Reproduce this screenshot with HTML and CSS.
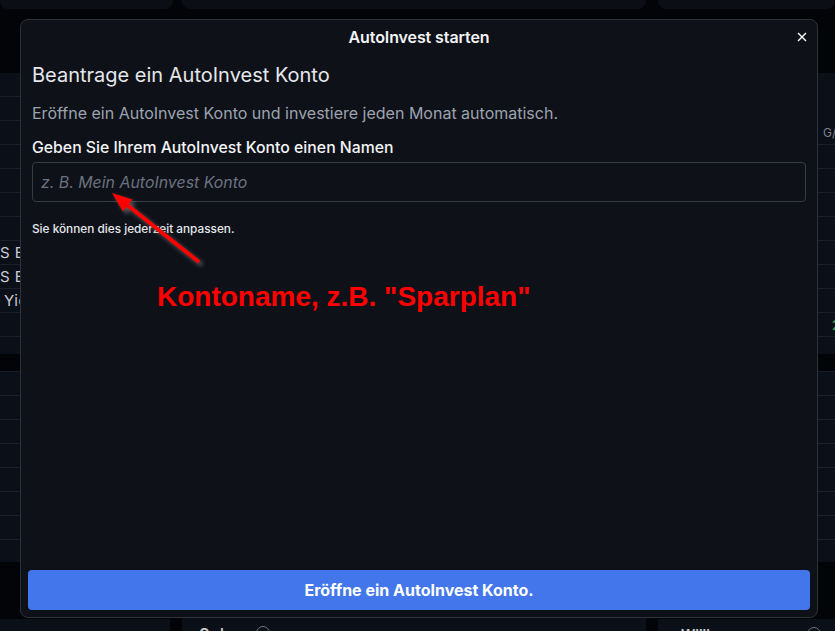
FILE: index.html
```html
<!DOCTYPE html>
<html lang="de">
<head>
<meta charset="utf-8">
<title>AutoInvest starten</title>
<link rel="stylesheet" href="styles.css">
</head>
<body>
<div class="page">
  <div class="col col-left">
    <div class="topcard"></div>
    <div class="panel panel-a">
      <div class="phead"></div>
      <div class="row"></div>
      <div class="row"></div>
      <div class="row"></div>
      <div class="row"></div>
      <div class="row"></div>
      <div class="row"></div>
      <div class="row"><span class="rtext">S ETF</span></div>
      <div class="row"><span class="rtext">S ETF</span></div>
      <div class="row"><span class="rtext pad">Yield</span></div>
      <div class="row"></div>
    </div>
    <div class="panel panel-b">
      <div class="row"></div>
      <div class="row"></div>
      <div class="row"></div>
      <div class="row"></div>
      <div class="row"></div>
      <div class="row"></div>
      <div class="row"></div>
    </div>
    <div class="panel panel-c"></div>
  </div>
  <div class="col col-mid">
    <div class="topcard"></div>
    <div class="mid-fill"></div>
    <div class="panel panel-c"><span class="ptitle">Orders</span><span class="info"></span></div>
  </div>
  <div class="col col-right">
    <div class="topcard"></div>
    <div class="panel panel-a">
      <div class="phead tall"></div>
      <div class="row thead"><span class="htext">G/V</span></div>
      <div class="row"></div>
      <div class="row"></div>
      <div class="row"></div>
      <div class="row"></div>
      <div class="row"></div>
      <div class="row"></div>
      <div class="row"></div>
      <div class="row"><span class="gtext">2,45</span></div>
      <div class="row"></div>
    </div>
    <div class="panel panel-b">
      <div class="row"></div>
      <div class="row"></div>
      <div class="row"></div>
      <div class="row"></div>
      <div class="row"></div>
      <div class="row"></div>
      <div class="row"></div>
    </div>
    <div class="panel panel-c"><span class="ptitle w">Willkommen</span><span class="info r"></span></div>
  </div>
</div>

<div class="modal">
  <div class="modal-header">
    <span class="modal-title">AutoInvest starten</span>
    <button class="close" aria-label="Schließen">
      <svg width="10" height="10" viewBox="0 0 10 10"><path d="M1 1 L9 9 M9 1 L1 9" stroke="#ffffff" stroke-width="1.4" fill="none"/></svg>
    </button>
  </div>
  <div class="modal-body">
    <h2 class="heading">Beantrage ein AutoInvest Konto</h2>
    <p class="sub">Eröffne ein AutoInvest Konto und investiere jeden Monat automatisch.</p>
    <label class="label" for="kname">Geben Sie Ihrem AutoInvest Konto einen Namen</label>
    <input id="kname" class="field" type="text" placeholder="z. B. Mein AutoInvest Konto">
    <p class="hint">Sie können dies jederzeit anpassen.</p>
  </div>
  <button class="primary">Eröffne ein AutoInvest Konto.</button>

  <svg class="arrow" width="300" height="300" viewBox="0 0 300 300">
    <line x1="178" y1="242" x2="105" y2="184" stroke="#ff0000" stroke-width="4"/>
    <polygon points="91,173 111.5,179.5 102,191.5" fill="#ff0000"/>
  </svg>
  <div class="note">Kontoname, z.B. "Sparplan"</div>
</div>
</body>
</html>
```
FILE: styles.css
```css
html, body {
  margin: 0;
  padding: 0;
}
body {
  width: 835px;
  height: 631px;
  overflow: hidden;
  background: #030407;
  font-family: Inter, "Noto Sans", sans-serif;
  position: relative;
}

/* background dashboard */
.page {
  display: grid;
  grid-template-columns: 170px 464px 1fr;
  column-gap: 12px;
  height: 631px;
}
.col {
  display: flex;
  flex-direction: column;
  min-width: 0;
}
.col-left .topcard { margin-right: -3px; }
.topcard {
  height: 9px;
  background: #0b0e15;
  border-radius: 0 0 8px 8px;
}
.panel {
  background: #0b0f17;
  overflow: hidden;
}
.panel-a {
  margin-top: 64px;
  height: 281px;
}
.panel-b {
  margin-top: 17px;
  height: 190px;
  border-top: 1px solid #161b25;
}
.panel-c {
  margin-top: 57px;
  flex: 1;
  position: relative;
}
.mid-fill { flex: 1; }
.col-mid .panel-c { margin-top: 0; height: 13px; flex: none; }
.phead { height: 23px; border-bottom: 1px solid #1a1f29; }
.phead.tall { height: 48px; border-bottom: none; }
.row {
  height: 23px;
  border-bottom: 1px solid #1a1f29;
  display: flex;
  align-items: center;
  white-space: nowrap;
}
.rtext {
  font-size: 15px;
  color: #c9ccd3;
  letter-spacing: 0.5px;
}
.rtext.pad { padding-left: 4px; }
.htext {
  padding-left: 165px;
  font-size: 12px;
  color: #7c8391;
}
.gtext {
  padding-left: 174px;
  font-size: 13px;
  font-weight: 600;
  color: #16a34a;
}
.ptitle {
  position: absolute;
  left: 17px;
  top: 7px;
  font-size: 14px;
  font-weight: 600;
  color: #c9ccd3;
}
.ptitle.w { left: 23px; }
.info {
  position: absolute;
  left: 74px;
  top: 8px;
  width: 12px;
  height: 12px;
  border: 1.5px solid #6b7280;
  border-radius: 50%;
}
.info.r { left: 149px; }

/* modal */
.modal {
  position: absolute;
  left: 20px;
  top: 19px;
  width: 798px;
  height: 599px;
  box-sizing: border-box;
  background: #0e1118;
  border: 1px solid #2c313c;
  border-radius: 8px;
  display: flex;
  flex-direction: column;
}
.modal-header {
  height: 34px;
  display: flex;
  align-items: center;
  justify-content: center;
  position: relative;
  flex: none;
}
.modal-title {
  font-size: 16px;
  font-weight: 600;
  color: #f3f4f6;
  letter-spacing: -0.1px;
}
.close {
  position: absolute;
  right: 10px;
  top: 12px;
  width: 10px;
  height: 10px;
  padding: 0;
  border: none;
  background: none;
  display: flex;
}
.modal-body {
  padding: 0 11px;
  display: flex;
  flex-direction: column;
}
.heading {
  margin: 7px 0 0;
  font-size: 20px;
  line-height: 28px;
  font-weight: 400;
  color: #e5e7eb;
}
.sub {
  margin: 12px 0 0;
  font-size: 16px;
  line-height: 24px;
  color: #9ca3af;
}
.label {
  margin-top: 12px;
  font-size: 15.8px;
  line-height: 22px;
  font-weight: 500;
  color: #f3f4f6;
}
.field {
  margin-top: 3px;
  height: 40px;
  box-sizing: border-box;
  background: transparent;
  border: 1px solid #353b47;
  border-radius: 4px;
  padding: 0 8px;
  font-family: Inter, "Noto Sans", sans-serif;
  font-size: 15.9px;
  color: #e5e7eb;
  outline: none;
}
.field::placeholder {
  color: #6b7280;
  font-style: italic;
}
.hint {
  margin: 19px 0 0;
  font-size: 11.8px;
  line-height: 16px;
  font-weight: 500;
  color: #e5e7eb;
}
.primary {
  margin: auto 7px 7px;
  height: 40px;
  border: none;
  border-radius: 4px;
  background: #4376eb;
  color: #ffffff;
  font-family: Inter, "Noto Sans", sans-serif;
  font-size: 16px;
  font-weight: 700;
  flex: none;
}

/* annotation */
.arrow {
  position: absolute;
  left: 0;
  top: 0;
  filter: drop-shadow(3px 3px 2px rgba(140, 140, 140, 0.6));
}
.note {
  position: absolute;
  left: 136px;
  top: 263px;
  font-family: "Liberation Sans", Arial, sans-serif;
  font-size: 28px;
  line-height: 28px;
  font-weight: 700;
  color: #ff0000;
  white-space: nowrap;
}
```
